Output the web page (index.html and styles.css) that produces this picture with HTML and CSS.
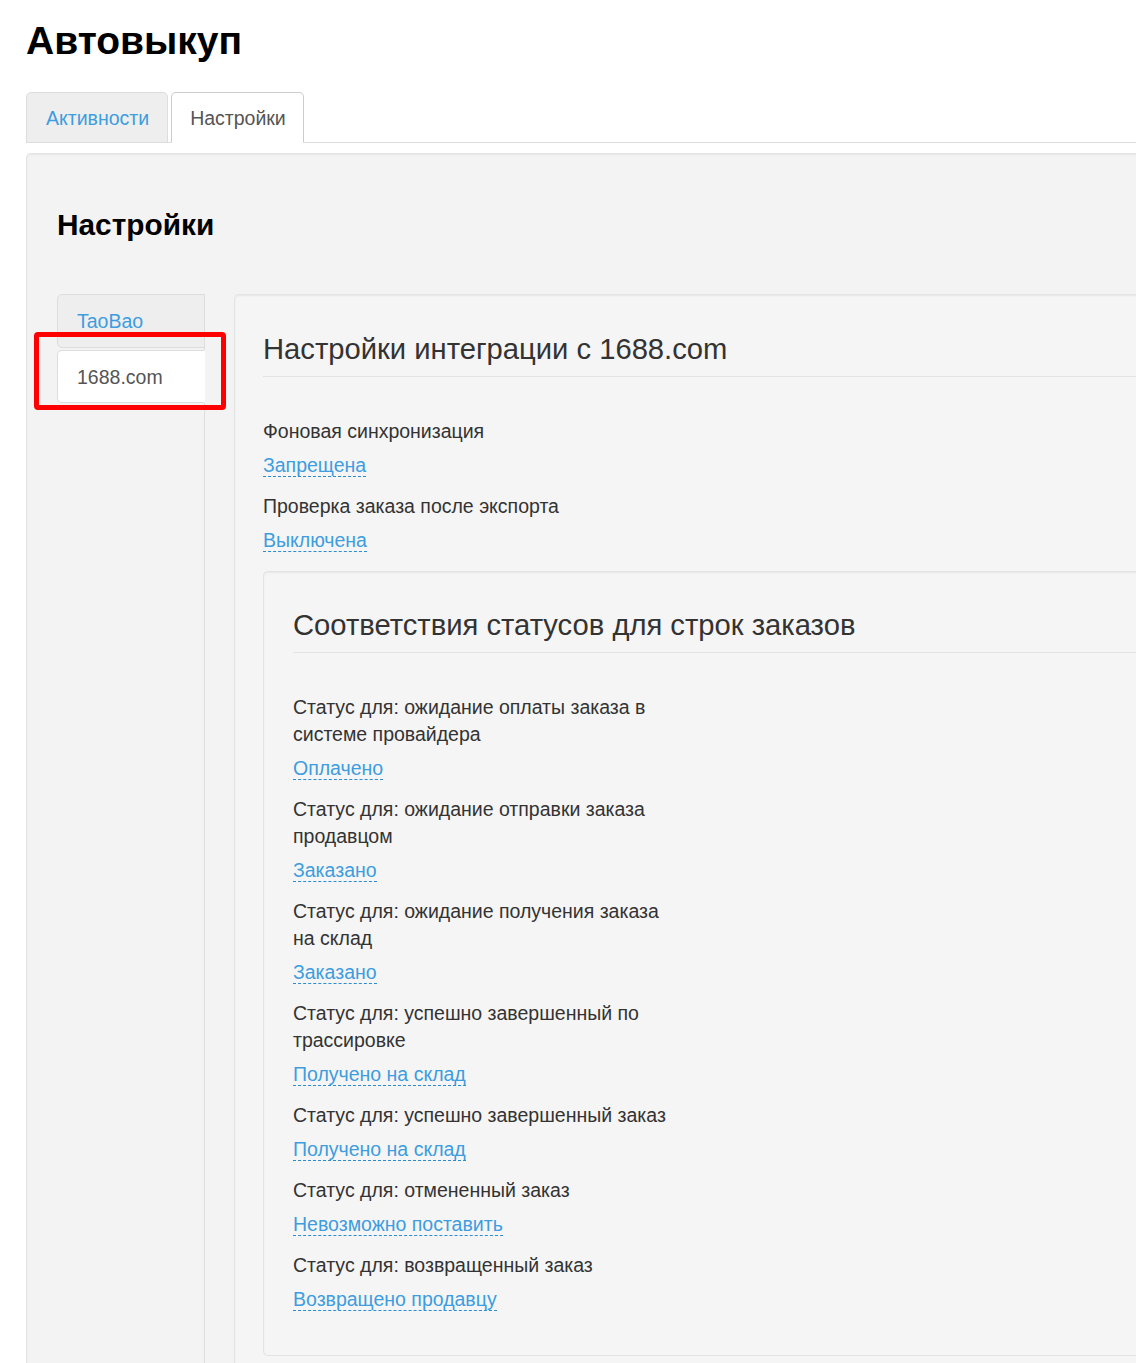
FILE: index.html
```html
<!DOCTYPE html>
<html lang="ru">
<head>
<meta charset="utf-8">
<title>Автовыкуп</title>
<link rel="stylesheet" href="styles.css">
</head>
<body>
<div class="page">
  <h1 class="page-title">Автовыкуп</h1>
  <ul class="tabs">
    <li class="tab"><span class="tab-link">Активности</span></li>
    <li class="tab tab-active"><span class="tab-link">Настройки</span></li>
  </ul>
  <div class="tab-panel">
    <h2 class="section-title">Настройки</h2>
    <div class="layout">
      <ul class="side-nav">
        <li class="side-item"><span class="side-link">TaoBao</span></li>
        <li class="side-item side-active"><span class="side-link">1688.com</span><span class="highlight"></span></li>
      </ul>
      <div class="well outer-well">
        <h3 class="well-title">Настройки интеграции с 1688.com</h3>
        <div class="field">
          <div class="field-label">Фоновая синхронизация</div>
          <div class="field-value"><span class="dash-link">Запрещена</span></div>
        </div>
        <div class="field">
          <div class="field-label">Проверка заказа после экспорта</div>
          <div class="field-value"><span class="dash-link">Выключена</span></div>
        </div>
        <div class="well inner-well">
          <h3 class="well-title">Соответствия статусов для строк заказов</h3>
          <div class="field">
            <div class="field-label">Статус для: ожидание оплаты заказа в системе провайдера</div>
            <div class="field-value"><span class="dash-link">Оплачено</span></div>
          </div>
          <div class="field">
            <div class="field-label">Статус для: ожидание отправки заказа продавцом</div>
            <div class="field-value"><span class="dash-link">Заказано</span></div>
          </div>
          <div class="field">
            <div class="field-label">Статус для: ожидание получения заказа на склад</div>
            <div class="field-value"><span class="dash-link">Заказано</span></div>
          </div>
          <div class="field">
            <div class="field-label">Статус для: успешно завершенный по трассировке</div>
            <div class="field-value"><span class="dash-link">Получено на склад</span></div>
          </div>
          <div class="field">
            <div class="field-label">Статус для: успешно завершенный заказ</div>
            <div class="field-value"><span class="dash-link">Получено на склад</span></div>
          </div>
          <div class="field">
            <div class="field-label">Статус для: отмененный заказ</div>
            <div class="field-value"><span class="dash-link">Невозможно поставить</span></div>
          </div>
          <div class="field">
            <div class="field-label">Статус для: возвращенный заказ</div>
            <div class="field-value"><span class="dash-link">Возвращено продавцу</span></div>
          </div>
        </div>
        <div class="spacer"></div>
      </div>
    </div>
  </div>
</div>
</body>
</html>
```

FILE: styles.css
```css
html, body {
  margin: 0;
  padding: 0;
  overflow: hidden;
  background: #fff;
}

body {
  font-family: "Liberation Sans", Arial, sans-serif;
  font-size: 19.5px;
  line-height: 27px;
  color: #333;
}

.page {
  width: 1200px;
  padding-left: 26px;
}

.page-title {
  margin: 19px 0 0 0;
  font-size: 39px;
  line-height: 44px;
  font-weight: bold;
  color: #000;
}

.tabs {
  list-style: none;
  margin: 29px 0 0 0;
  padding: 0;
  display: flex;
  border-bottom: 1px solid #ddd;
}

.tab {
  margin-right: 3px;
  margin-bottom: -1px;
}

.tab-link {
  display: block;
  padding: 13px 18px 11px 19px;
  line-height: 25px;
  font-size: 19.5px;
  color: #3d9ddf;
  background: #eee;
  border: 1px solid #ddd;
  border-radius: 5px 5px 0 0;
}

.tab-active .tab-link {
  padding-left: 18px;
  padding-right: 17px;
  color: #555;
  background: #fff;
  border-color: #ccc;
  border-bottom-color: transparent;
}

.tab-panel {
  margin-top: 10px;
  background: #f3f3f3;
  border: 1px solid #e3e3e3;
  border-right: none;
  border-radius: 5px 0 0 0;
  box-shadow: inset 0 1px 2px rgba(0, 0, 0, 0.05);
  padding: 0 0 0 30px;
  min-height: 1300px;
}

.section-title {
  margin: 54px 0 0 0;
  font-size: 29.8px;
  line-height: 33px;
  font-weight: bold;
  color: #000;
}

.layout {
  display: flex;
  align-items: stretch;
  margin-top: 53px;
}

.side-nav {
  list-style: none;
  margin: 0;
  padding: 0;
  width: 147px;
  flex: none;
  border-right: 1px solid #ddd;
  min-height: 1100px;
}

.side-item {
  position: relative;
  margin-right: -1px;
  margin-bottom: 2px;
}

.side-link {
  display: block;
  padding: 14px 19px 13px 19px;
  line-height: 25px;
  font-size: 19.5px;
  color: #3d9ddf;
  background: #eee;
  border: 1px solid #ddd;
  border-radius: 5px 0 0 5px;
}

.side-active .side-link {
  padding-bottom: 12px;
  color: #555;
  background: #fff;
  border-color: #ddd;
  border-right-color: transparent;
}

.highlight {
  position: absolute;
  left: -23px;
  top: -18px;
  width: 192px;
  height: 78px;
  box-sizing: border-box;
  border: 5px solid #ff0000;
  border-radius: 4px;
}

.well {
  background: #f5f5f5;
  border: 1px solid #e3e3e3;
  border-radius: 5px;
  box-shadow: inset 0 1px 2px rgba(0, 0, 0, 0.06);
}

.outer-well {
  flex: 1;
  margin-left: 29px;
  padding: 38px 0 0 28px;
  border-right: none;
  border-bottom: none;
  border-radius: 5px 0 0 0;
}

.inner-well {
  margin-top: 17px;
  padding: 37px 0 28px 29px;
  border-right: none;
  border-radius: 5px 0 0 5px;
}

.well-title {
  margin: 0 0 41px 0;
  padding: 0 0 10px 0;
  font-size: 29.2px;
  line-height: 33px;
  font-weight: normal;
  color: #333;
  border-bottom: 1px solid #e3e3e3;
}

.field-label {
  max-width: 385px;
  margin-bottom: 7px;
}

.field-value {
  margin-bottom: 14px;
}

.dash-link {
  color: #3d9ddf;
  border-bottom: 1px dashed #2b8bd3;
}

.spacer {
  height: 200px;
}
```
